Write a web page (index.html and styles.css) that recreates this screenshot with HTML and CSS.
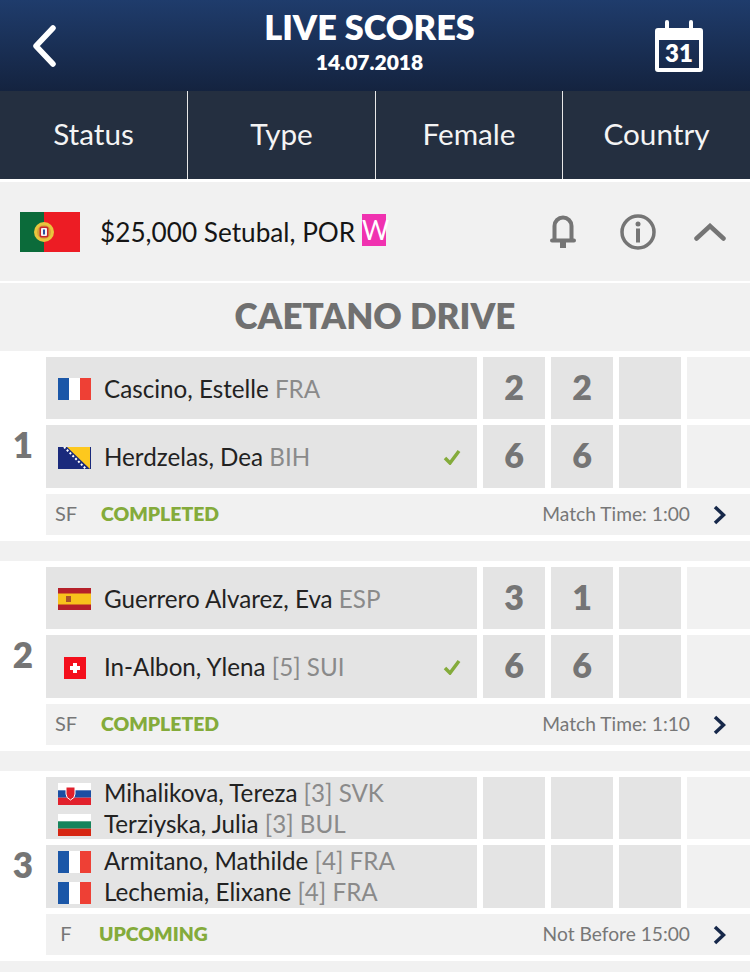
FILE: index.html
```html
<!DOCTYPE html>
<html lang="en">

<head>
  <meta charset="UTF-8">
  <meta name="viewport" content="width=device-width, initial-scale=1.0">
  <title>Live Scores</title>
  <link rel="stylesheet" href="styles.css">
</head>

<body>
  <svg class="defs" width="0" height="0" aria-hidden="true">
    <symbol id="flag-fra" viewBox="0 0 33 22">
      <rect width="11" height="22" fill="#1b57a8"/>
      <rect x="11" width="11" height="22" fill="#fff"/>
      <rect x="22" width="11" height="22" fill="#ee4035"/>
    </symbol>
    <symbol id="go" viewBox="0 0 14 20">
      <path d="M3 2l8.500 8-8.500 8" fill="none" stroke="#16284a" stroke-width="3.500"/>
    </symbol>
    <symbol id="tick" viewBox="0 0 18 16">
      <path d="M2 9l5 5L16 2" fill="none" stroke="#84ab3b" stroke-width="3.500"/>
    </symbol>
  </svg>

  <header class="topbar">
    <svg class="back" width="24" height="42" viewBox="0 0 24 42">
      <path d="M21 3L4 21l17 18" fill="none" stroke="#fff" stroke-width="5.500" stroke-linecap="round" stroke-linejoin="round"/>
    </svg>
    <div class="title">
      <h1>LIVE SCORES</h1>
      <p>14.07.2018</p>
    </div>
    <svg class="calendar" width="48" height="52" viewBox="0 0 48 52">
      <path fill="#fff" fill-rule="evenodd" d="M3 8h42a3 3 0 0 1 3 3v38a3 3 0 0 1-3 3H3a3 3 0 0 1-3-3V11a3 3 0 0 1 3-3zm1 12v28h40V20z"/>
      <rect x="10" y="0" width="4" height="13" rx="2" fill="#fff"/>
      <rect x="34" y="0" width="4" height="13" rx="2" fill="#fff"/>
      <text x="24" y="42" text-anchor="middle" class="calendar-day">31</text>
    </svg>
  </header>

  <nav class="tabs">
    <div class="tab">Status</div>
    <div class="tab">Type</div>
    <div class="tab">Female</div>
    <div class="tab">Country</div>
  </nav>

  <section class="tournament">
    <svg class="flag-big" width="60" height="40" viewBox="0 0 60 40">
      <rect width="60" height="40" fill="#ed1c24"/>
      <rect width="24" height="40" fill="#0b6b3a"/>
      <circle cx="24" cy="20" r="10" fill="#e9c53d"/>
      <circle cx="24" cy="20" r="7" fill="#d8a23a"/>
      <rect x="19.500" y="14.500" width="9" height="11" rx="2" fill="#c8262c"/>
      <rect x="21" y="16" width="6" height="8" rx="1" fill="#f4f4f4"/>
      <rect x="23" y="17.500" width="2" height="5" fill="#2a4f9e"/>
    </svg>
    <div class="tournament-name">$25,000 Setubal, POR <span class="tag">W</span></div>
    <div class="tournament-icons">
      <svg class="bell" width="26" height="33" viewBox="0 0 26 33">
        <path d="M4.500 25V11a8.500 8.500 0 0 1 17 0v14" fill="none" stroke="#757575" stroke-width="4"/>
        <path d="M2 25.500h22" stroke="#757575" stroke-width="4" stroke-linecap="round"/>
        <rect x="10" y="27" width="6" height="6" fill="#757575"/>
      </svg>
      <svg width="36" height="36" viewBox="0 0 36 36">
        <circle cx="18" cy="18" r="16" fill="none" stroke="#757575" stroke-width="3.500"/>
        <rect x="16" y="14.500" width="4" height="14" fill="#757575"/>
        <circle cx="18" cy="10" r="2.500" fill="#757575"/>
      </svg>
      <svg width="32" height="18" viewBox="0 0 32 18">
        <path d="M2.500 15.500L16 3l13.500 12.500" fill="none" stroke="#757575" stroke-width="4.500" stroke-linecap="round"/>
      </svg>
    </div>
  </section>

  <h2 class="court">CAETANO DRIVE</h2>

  <main class="matches">
    <section class="match">
      <div class="order">1</div>
      <div class="board">
        <div class="side">
          <svg class="flag"><use href="#flag-fra"/></svg>
          <span class="name">Cascino, Estelle <em>FRA</em></span>
        </div>
        <div class="set">2</div><div class="set">2</div><div class="set"></div><div class="set last"></div>
        <div class="side">
          <svg class="flag" viewBox="0 0 33 22">
            <rect width="33" height="22" fill="#1a2a7c"/>
            <path d="M9 0h23v22z" fill="#fdc81e"/>
            <path d="M6 0l22 22" stroke="#fff" stroke-width="2" stroke-dasharray="2 2"/>
          </svg>
          <span class="name">Herdzelas, Dea <em>BIH</em></span>
          <svg class="tick"><use href="#tick"/></svg>
        </div>
        <div class="set">6</div><div class="set">6</div><div class="set"></div><div class="set last"></div>
        <div class="info">
          <span class="round">SF</span>
          <span class="status">COMPLETED</span>
          <span class="time">Match Time: 1:00</span>
          <svg class="go"><use href="#go"/></svg>
        </div>
      </div>
    </section>

    <section class="match">
      <div class="order">2</div>
      <div class="board">
        <div class="side">
          <svg class="flag" viewBox="0 0 33 22">
            <rect width="33" height="22" fill="#b5202a"/>
            <rect y="5.500" width="33" height="11" fill="#f8c21c"/>
            <rect x="8" y="8" width="5" height="6" fill="#a8542a"/>
          </svg>
          <span class="name">Guerrero Alvarez, Eva <em>ESP</em></span>
        </div>
        <div class="set">3</div><div class="set">1</div><div class="set"></div><div class="set last"></div>
        <div class="side">
          <svg class="flag" viewBox="0 0 33 22">
            <rect x="6" width="22" height="22" fill="#f40f1c"/>
            <path d="M15 6h4v3h3v4h-3v3h-4v-3h-3V9h3z" fill="#fff"/>
          </svg>
          <span class="name">In-Albon, Ylena <em>[5] SUI</em></span>
          <svg class="tick"><use href="#tick"/></svg>
        </div>
        <div class="set">6</div><div class="set">6</div><div class="set"></div><div class="set last"></div>
        <div class="info">
          <span class="round">SF</span>
          <span class="status">COMPLETED</span>
          <span class="time">Match Time: 1:10</span>
          <svg class="go"><use href="#go"/></svg>
        </div>
      </div>
    </section>

    <section class="match">
      <div class="order">3</div>
      <div class="board">
        <div class="side doubles">
          <div class="pair">
            <svg class="flag" viewBox="0 0 33 22">
              <rect width="33" height="22" fill="#fff"/>
              <rect y="7.300" width="33" height="7.400" fill="#1b4ea3"/>
              <rect y="14.700" width="33" height="7.300" fill="#e1202c"/>
              <path d="M8 4h9v7q0 4-4.500 6Q8 15 8 11z" fill="#e1202c" stroke="#fff"/>
            </svg>
            <span class="name">Mihalikova, Tereza <em>[3] SVK</em></span>
          </div>
          <div class="pair">
            <svg class="flag" viewBox="0 0 33 22">
              <rect width="33" height="22" fill="#fff"/>
              <rect y="7.300" width="33" height="7.400" fill="#16845c"/>
              <rect y="14.700" width="33" height="7.300" fill="#d62612"/>
            </svg>
            <span class="name">Terziyska, Julia <em>[3] BUL</em></span>
          </div>
        </div>
        <div class="set"></div><div class="set"></div><div class="set"></div><div class="set last"></div>
        <div class="side doubles">
          <div class="pair">
            <svg class="flag"><use href="#flag-fra"/></svg>
            <span class="name">Armitano, Mathilde <em>[4] FRA</em></span>
          </div>
          <div class="pair">
            <svg class="flag"><use href="#flag-fra"/></svg>
            <span class="name">Lechemia, Elixane <em>[4] FRA</em></span>
          </div>
        </div>
        <div class="set"></div><div class="set"></div><div class="set"></div><div class="set last"></div>
        <div class="info">
          <span class="round">F</span>
          <span class="status upcoming">UPCOMING</span>
          <span class="time">Not Before 15:00</span>
          <svg class="go"><use href="#go"/></svg>
        </div>
      </div>
    </section>
  </main>
</body>

</html>
```

FILE: styles.css
```css
*,
*::before,
*::after {
  box-sizing: border-box;
}

body {
  margin: 0;
  height: 972px;
  overflow: hidden;
  font-family: Lato, 'Open Sans', Arial, sans-serif;
  background-color: #fff;
}

.defs {
  position: absolute;
}

.topbar {
  display: flex;
  justify-content: space-between;
  align-items: center;
  height: 91px;
  padding: 0 47px 0 32px;
  color: #fff;
  background-image: linear-gradient(to bottom, #1f3c6c, #14233f);
}

.title {
  align-self: flex-start;
  padding-top: 9px;
  text-align: center;
  margin-left: 28px;
}

.title h1 {
  margin: 0;
  font-size: 34.3px;
  line-height: 36px;
  font-weight: 800;
}

.title p {
  margin: 5px 0 0;
  font-size: 21px;
  line-height: 24px;
  font-weight: 800;
}

.calendar-day {
  font-family: Lato, sans-serif;
  font-size: 24px;
  font-weight: 800;
  fill: #fff;
}

.tabs {
  display: grid;
  grid-template-columns: 188px 188px 187px 187px;
  height: 88px;
  background-color: #242f40;
}

.tab {
  display: flex;
  justify-content: center;
  align-items: center;
  padding-bottom: 4px;
  font-size: 29.7px;
  color: #f4f4f4;
  border-right: 1px solid #e8e8e8;
}

.tab:last-child {
  border-right: none;
}

.tournament {
  display: flex;
  align-items: center;
  height: 99px;
  margin-top: 3px;
  padding: 0 24px 0 20px;
  background-color: #f1f1f1;
}

.flag-big {
  flex: none;
  margin-right: 20px;
}

.tournament-name {
  flex: 1;
  padding-bottom: 2px;
  font-size: 26.2px;
  color: #151515;
}

.tag {
  display: inline-block;
  width: 24px;
  height: 32px;
  line-height: 32px;
  text-align: center;
  vertical-align: 2px;
  color: #fff;
  background-color: #f032b0;
}

.tournament-icons {
  display: flex;
  align-items: center;
  gap: 38px;
}

.bell {
  margin-right: 6px;
}

.court {
  display: flex;
  justify-content: center;
  align-items: center;
  height: 68px;
  margin: 2px 0 0;
  padding-bottom: 4px;
  font-size: 35px;
  font-weight: 800;
  color: #707070;
  background-color: #f1f1f1;
}

.matches {
  height: 621px;
  background-color: #f1f1f1;
}

.match {
  display: flex;
  height: 190px;
  margin-bottom: 20px;
  padding: 6px 0;
  background-color: #fff;
}

.order {
  display: flex;
  justify-content: center;
  align-items: center;
  width: 46px;
  flex: none;
  padding-bottom: 4px;
  font-size: 35px;
  font-weight: 800;
  color: #757575;
}

.board {
  display: grid;
  grid-template-columns: 431px 62px 62px 62px 63px;
  grid-template-rows: 62px 63px 41px;
  gap: 6px;
}

.side {
  display: flex;
  align-items: center;
  padding: 0 16px 0 12px;
  background-color: #e4e4e4;
}

.flag {
  flex: none;
  width: 33px;
  height: 22px;
  margin: 2px 13px 0 0;
}

.name {
  flex: 1;
  font-size: 24.2px;
  color: #222;
}

.name em {
  font-style: normal;
  color: #8a8a8a;
}

.tick {
  width: 18px;
  height: 16px;
}

.doubles {
  display: block;
  padding: 0 12px;
}

.pair {
  display: flex;
  align-items: center;
  height: 31px;
}

.pair .flag {
  margin-top: 3px;
}

.set {
  display: flex;
  justify-content: center;
  align-items: center;
  padding-bottom: 4px;
  font-size: 34px;
  font-weight: 800;
  color: #757575;
  background-color: #e4e4e4;
}

.set.last {
  background-color: #f1f1f1;
}

.info {
  grid-column: 1 / -1;
  display: flex;
  align-items: center;
  padding: 0 24px 0 0;
  background-color: #f1f1f1;
}

.round {
  width: 40px;
  margin-right: 15px;
  padding-bottom: 3px;
  text-align: center;
  font-size: 20px;
  color: #777;
}

.status {
  flex: 1;
  padding-bottom: 2px;
  font-size: 19.4px;
  font-weight: 800;
  color: #84ab3b;
}

.upcoming {
  margin-left: -2px;
}

.time {
  padding-bottom: 2px;
  font-size: 19.2px;
  color: #777;
}

.go {
  width: 14px;
  height: 20px;
  margin-left: 22px;
}
```
